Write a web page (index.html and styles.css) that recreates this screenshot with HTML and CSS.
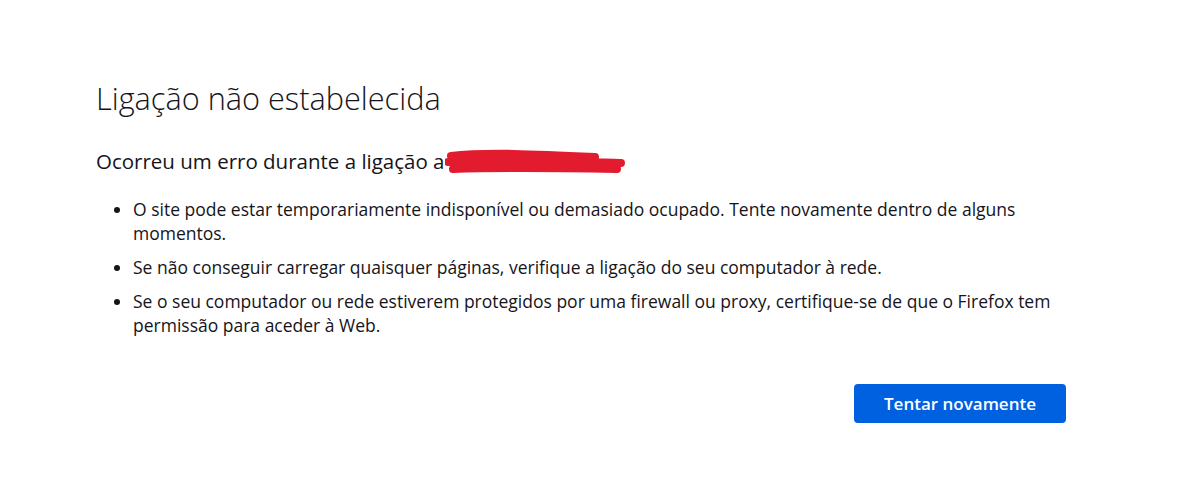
FILE: index.html
```html
<!DOCTYPE html>
<html lang="pt">
  <head>
    <meta charset="UTF-8" />
    <meta name="viewport" content="width=device-width, initial-scale=1.0" />
    <title>Problema ao carregar a página</title>
    <link rel="stylesheet" href="styles.css">
  </head>
  <body>
    <div class="container">
      <h1 class="title-text">Ligação não estabelecida</h1>
      <p class="short-desc">
        Ocorreu um erro durante a ligação a<svg class="redact" width="182" height="28" viewBox="0 0 182 28">
          <path d="M6 7 C 40 3, 90 5, 150 8 M3 13 C 50 11, 110 12, 176 14 M8 20 C 60 18, 120 19, 172 20" />
        </svg>
      </p>
      <ul class="long-desc">
        <li>O site pode estar temporariamente indisponível ou demasiado ocupado. Tente novamente dentro de alguns momentos.</li>
        <li>Se não conseguir carregar quaisquer páginas, verifique a ligação do seu computador à rede.</li>
        <li>Se o seu computador ou rede estiverem protegidos por uma firewall ou proxy, certifique-se de que o Firefox tem permissão para aceder à Web.</li>
      </ul>
      <div class="button-container">
        <button class="primary">Tentar novamente</button>
      </div>
    </div>
  </body>
</html>
```

FILE: styles.css
```css
body {
  font-family: "Open Sans", "Noto Sans", sans-serif;
  margin: 0;
  padding: 0;
  background-color: #fff;
  color: #15141a;
  font-size: 17.5px;
}
.container {
  width: 970px;
  margin: 0 0 0 96px;
  padding-top: 78px;
}
.title-text {
  font-size: 30.7px;
  font-weight: 300;
  line-height: 40px;
  margin: 0 0 29px;
}
.short-desc {
  font-size: 20.5px;
  line-height: 28px;
  height: 28px;
  margin: 0 0 22px;
}
.redact {
  vertical-align: -8px;
}
.redact path {
  fill: none;
  stroke: #e31b2f;
  stroke-width: 8;
  stroke-linecap: round;
}
.long-desc {
  margin: 0;
  padding-left: 37px;
  line-height: 24px;
}
.long-desc li {
  margin-bottom: 10px;
}
.long-desc li:last-child {
  margin-bottom: 0;
}
.button-container {
  display: flex;
  justify-content: flex-end;
  margin-top: 47px;
}
.primary {
  font-family: inherit;
  font-size: 17px;
  font-weight: 600;
  color: #fff;
  background-color: #0061e0;
  border: none;
  border-radius: 4px;
  width: 212px;
  height: 39px;
}
```
